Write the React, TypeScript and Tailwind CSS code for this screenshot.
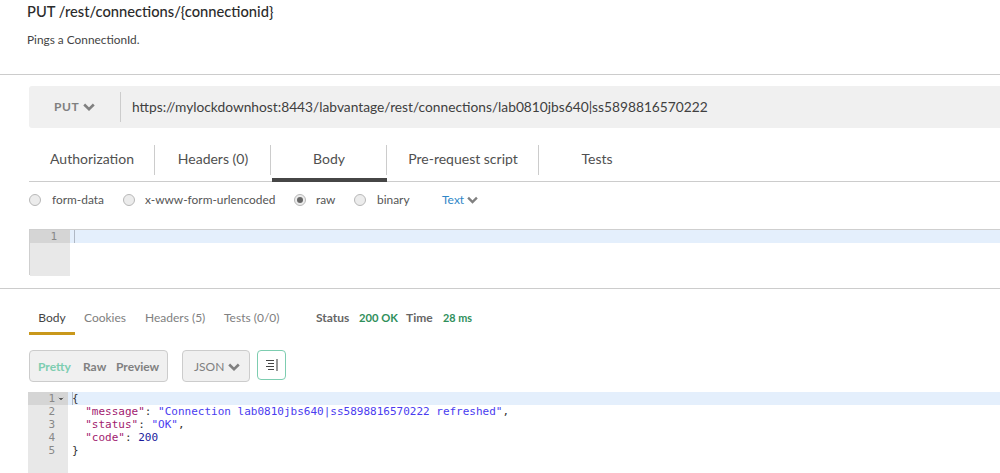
import { ChevronDown } from 'lucide-react';

function Chevron({ className }: { className: string }) {
  return (
    <svg viewBox="0 0 12 8" fill="none" stroke="currentColor" strokeWidth="2.6" className={className}>
      <path d="M1.2 1.5 6 6.2l4.8-4.7" />
    </svg>
  );
}

function Radio({ label, checked, gap, width }: { label: string; checked?: boolean; gap: string; width: string }) {
  return (
    <div className={`flex items-center ${gap} ${width}`}>
      <span className="flex h-3 w-3 shrink-0 items-center justify-center rounded-full border border-[#b8b8b8] bg-[#ececec]">
        {checked && <span className="h-1.5 w-1.5 rounded-full bg-[#666666]" />}
      </span>
      <span className="text-[11.9px] whitespace-nowrap text-[#555555]">{label}</span>
    </div>
  );
}

const requestTabs = [
  { label: 'Authorization', width: 'w-[126px]' },
  { label: 'Headers (0)', width: 'w-[116px]' },
  { label: 'Body', width: 'w-[116px]', active: true },
  { label: 'Pre-request script', width: 'w-[152px]' },
  { label: 'Tests', width: 'w-[116px]', last: true },
];

export default function App() {
  return (
    <div className="h-[473px] w-[1000px] overflow-hidden bg-white font-['Lato','Open_Sans',sans-serif] text-[#333333]">
      {/* Title */}
      <div className="h-[74px] pt-[2px] pl-[27px]">
        <div className="text-[14.7px] leading-[18px] font-medium text-[#2b2b2b]">{'PUT /rest/connections/{connectionid}'}</div>
        <div className="mt-[11px] text-[11.85px] leading-[18px] text-[#444444]">Pings a ConnectionId.</div>
      </div>
      <div className="h-px bg-[#cccccc]" />

      {/* URL bar */}
      <div className="mt-[11px] ml-[29px] flex h-[42px] items-center rounded-l-[3px] bg-[#f0f0f0]">
        <div className="flex w-[91px] items-center pl-[25px]">
          <span className="text-xs font-bold tracking-[0.6px] text-[#808080]">PUT</span>
          <Chevron className="ml-[4px] h-2 w-3 text-[#808080]" />
        </div>
        <div className="h-[30px] w-px bg-[#cccccc]" />
        <div className="ml-[11px] text-[13.76px] whitespace-nowrap text-[#404040]">
          https://mylockdownhost:8443/labvantage/rest/connections/lab0810jbs640|ss5898816570222
        </div>
      </div>

      {/* Request tabs */}
      <div className="mt-[17px] ml-[29px] flex h-[37px] border-b border-[#cccccc]">
        {requestTabs.map((tab) => (
          <div key={tab.label} className={`relative flex h-[30px] items-center justify-center text-sm text-[#505050] ${tab.width}`}>
            <span className="-translate-y-px">{tab.label}</span>
            {!tab.last && <span className="absolute top-0 right-0 h-[30px] w-px bg-[#cccccc]" />}
            {tab.active && <span className="absolute top-[33px] right-0 left-px h-1 bg-[#464646]" />}
          </div>
        ))}
      </div>

      {/* Body type */}
      <div className="mt-[10px] ml-[29px] flex h-4 items-center">
        <Radio label="form-data" gap="gap-[11px]" width="w-[94px]" />
        <Radio label="x-www-form-urlencoded" gap="gap-[10px]" width="w-[171px]" />
        <Radio label="raw" checked gap="gap-[10px]" width="w-[60px]" />
        <Radio label="binary" gap="gap-[11px]" width="w-[88px]" />
        <span className="text-xs text-[#2f87c8]">Text</span>
        <Chevron className="ml-[3px] h-2 w-[11px] text-[#808080]" />
      </div>

      {/* Request editor */}
      <div className="mt-[21px] ml-[29px] h-[46px] border-t border-l border-[#cfcfcf]">
        <div className="flex h-[46px]">
          <div className="w-[40px] bg-[#e8e8e8]">
            <div className="h-[13px] bg-[#d5d5d5] pr-[13px] text-right font-['DejaVu_Sans_Mono',monospace] text-[11px] leading-[13px] text-[#888888]">1</div>
          </div>
          <div className="h-[13px] flex-1 bg-[#e4effc] pl-[4px]">
            <div className="h-[13px] w-px bg-[#b0b8c4]" />
          </div>
        </div>
      </div>
      <div className="mt-[13px] h-px bg-[#cccccc]" />

      {/* Response tabs */}
      <div className="mt-[21px] ml-[29px] flex h-[25px] items-start text-xs leading-[16px]">
        <div className="flex h-[25px] w-[46px] justify-center border-b-[3px] border-[#c9981b] text-[#444444]">Body</div>
        <span className="ml-[9px] w-[61px] text-[#808080]">Cookies</span>
        <span className="w-[79px] text-[#808080]">Headers (5)</span>
        <span className="w-[92px] text-[#808080]">Tests (0/0)</span>
        <span className="w-[43px] font-bold text-[#666666]">Status</span>
        <span className="w-[47px] text-[11.2px] font-bold text-[#2f8f5b]">200 OK</span>
        <span className="w-[37px] font-bold text-[#666666]">Time</span>
        <span className="text-[10.8px] font-bold text-[#2f8f5b]">28 ms</span>
      </div>

      {/* Response toolbar */}
      <div className="mt-[15px] ml-[29px] flex h-8 items-start text-xs">
        <div className="flex h-8 w-[139px] items-center rounded-[4px] border border-[#cccccc] bg-[#f0f0f0] pt-px pl-[8px] font-bold text-[#808080]">
          <span className="w-[45px] text-[#7dcdb0]">Pretty</span>
          <span className="w-[33px]">Raw</span>
          <span>Preview</span>
        </div>
        <div className="ml-[14px] flex h-8 w-[68px] items-center rounded-[4px] border border-[#cccccc] bg-[#f0f0f0] pt-px pl-[11px] text-[#808080]">
          <span>JSON</span>
          <Chevron className="ml-[4px] h-2 w-3 text-[#808080]" />
        </div>
        <div className="ml-[7px] flex h-[30px] w-[29px] items-center justify-center rounded-[4px] border border-[#7dcdb0] bg-white">
          <svg viewBox="0 0 14 14" className="h-[14px] w-[14px]" fill="none" stroke="#444444" strokeWidth="1.1">
            <path d="M1 2.5h8M3 5.5h6M1 8.5h8M3 11.5h6M12 1v12" />
          </svg>
        </div>
      </div>

      {/* Response code */}
      <div className="mt-[10px] ml-[28px] flex h-[81px] font-['DejaVu_Sans_Mono',monospace] text-[11px] leading-[13px]">
        <div className="w-[40px] bg-[#e8e8e8] text-[#888888]">
          <div className="relative h-[13px] bg-[#d5d5d5] pr-[13px] text-right">
            1
            <ChevronDown className="absolute top-[3px] right-[3px] h-2 w-2 fill-[#555555] text-[#555555]" />
          </div>
          {[2, 3, 4, 5].map((n) => (
            <div key={n} className="h-[13px] pr-[13px] text-right">{n}</div>
          ))}
        </div>
        <div className="flex-1 whitespace-pre text-[#333333]">
          <div className="relative h-[13px] bg-[#e4effc] pl-[4px]">
            <span className="absolute top-0 left-[4px] h-[13px] w-px bg-[#b0b8c4]" />
            {'{'}
          </div>
          <div className="pl-[4px]">
            {'  '}<span className="text-[#a11a6f]">"message"</span>: <span className="text-[#4a3cf0]">"Connection lab0810jbs640|ss5898816570222 refreshed"</span>,
          </div>
          <div className="pl-[4px]">
            {'  '}<span className="text-[#a11a6f]">"status"</span>: <span className="text-[#4a3cf0]">"OK"</span>,
          </div>
          <div className="pl-[4px]">
            {'  '}<span className="text-[#a11a6f]">"code"</span>: <span className="text-[#1a1a9c]">200</span>
          </div>
          <div className="pl-[4px]">{'}'}</div>
        </div>
      </div>
    </div>
  );
}
